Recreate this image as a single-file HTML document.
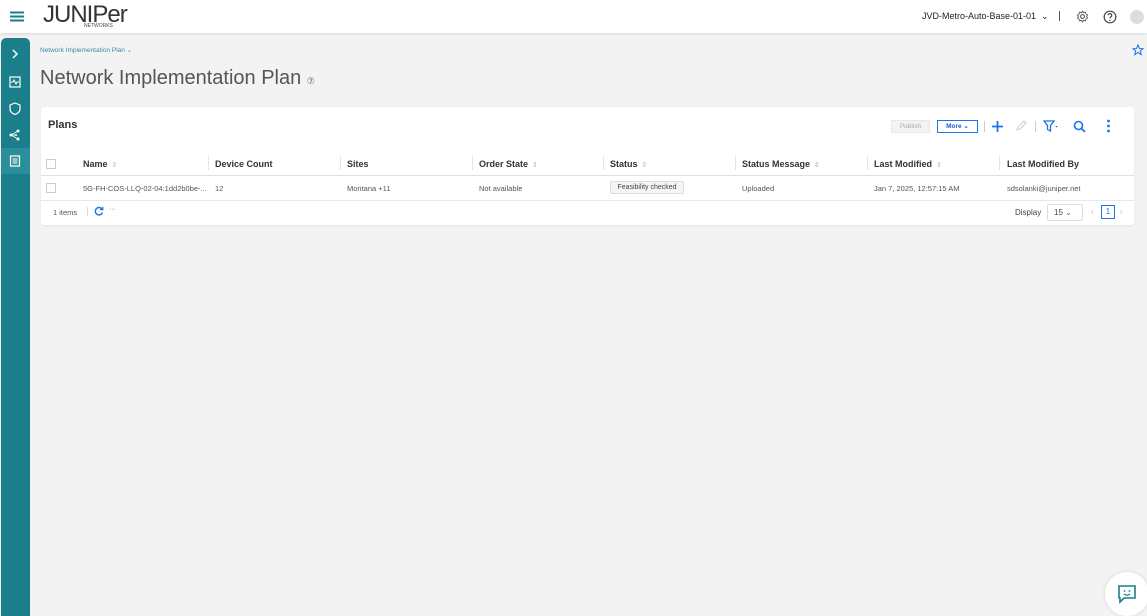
<!DOCTYPE html>
<html><head><meta charset="utf-8"><style>
*{box-sizing:border-box;margin:0;padding:0}
body{width:1147px;height:616px;overflow:hidden;background:#f3f3f3;font-family:"Liberation Sans",sans-serif;position:relative;color:#333}
.top{position:absolute;left:0;top:0;width:1147px;height:33px;background:#fff;box-shadow:0 1px 3px rgba(0,0,0,.12)}
.side{position:absolute;left:1px;top:38px;width:29px;height:578px;background:#1b7f8b;border-radius:5px 5px 0 0}
.abs{position:absolute}
.card{position:absolute;left:41px;top:107px;width:1093px;height:118px;background:#fff;border-radius:3px;box-shadow:0 1px 2px rgba(0,0,0,.06)}
.th{position:absolute;top:159px;font-size:9px;font-weight:bold;color:#333}
.td{position:absolute;top:184px;font-size:7.5px;color:#555}
.cb{position:absolute;width:10px;height:10px;border:1px solid #ccc;background:#fff;left:46px}
.sort{color:#bbb;font-size:7px;font-weight:normal;margin-left:4px}
.sep{position:absolute;top:156px;width:1px;height:14px;background:#e5e5e5}
</style></head><body>
<div class="top"></div>
<svg class="abs" style="left:10px;top:11px" width="14" height="11"><path d="M0 1.5H14M0 5.5H14M0 9.5H14" stroke="#1b7f8b" stroke-width="2"/></svg>
<div class="abs" style="left:43px;top:1px;font-size:24px;letter-spacing:-1px;color:#333">JUNIPer</div>
<div class="abs" style="left:84px;top:23px;font-size:5px;color:#444">NETWORKS</div>
<div class="abs" style="left:922px;top:11px;font-size:9px;color:#222">JVD-Metro-Auto-Base-01-01 &nbsp;⌄</div>
<div class="abs" style="left:1059px;top:11px;width:1px;height:10px;background:#555"></div>
<svg class="abs" style="left:1076px;top:10px" width="13" height="13" viewBox="0 0 24 24"><circle cx="12" cy="12" r="3.5" fill="none" stroke="#555" stroke-width="2"/><path d="M12 2l2 3 3.5-1 1 3.5 3 2-2 2.5 2 2.5-3 2-1 3.5-3.5-1-2 3-2-3-3.5 1-1-3.5-3-2 2-2.5-2-2.5 3-2 1-3.5 3.5 1z" fill="none" stroke="#555" stroke-width="1.6"/></svg>
<svg class="abs" style="left:1103px;top:10px" width="14" height="14" viewBox="0 0 24 24"><circle cx="12" cy="12" r="10" fill="none" stroke="#444" stroke-width="2"/><path d="M9 9a3 3 0 1 1 4 3c-1 .5-1 1.2-1 2.5" fill="none" stroke="#444" stroke-width="2"/><circle cx="12" cy="18" r="1.2" fill="#444"/></svg>
<div class="abs" style="left:1130px;top:10px;width:14px;height:14px;border-radius:50%;background:#ddd"></div>

<div class="side"></div>
<svg class="abs" style="left:10px;top:48px" width="10" height="12"><path d="M3 2l4 4-4 4" stroke="#fff" fill="none" stroke-width="1.5"/></svg>
<svg class="abs" style="left:9px;top:76px" width="12" height="12"><rect x="1" y="1" width="10" height="10" fill="none" stroke="#fff" stroke-width="1.2"/><path d="M2 6h2l1-2 2 4 1-2h2" stroke="#fff" fill="none"/></svg>
<svg class="abs" style="left:9px;top:102px" width="12" height="13"><path d="M6 1l5 2v4c0 3-2.5 4.5-5 5.5C3.5 11.5 1 10 1 7V3z" fill="none" stroke="#fff" stroke-width="1.2"/></svg>
<svg class="abs" style="left:9px;top:129px" width="12" height="12"><circle cx="2" cy="6" r="1.5" fill="#fff"/><circle cx="9" cy="2" r="1.5" fill="#fff"/><circle cx="9" cy="10" r="1.5" fill="#fff"/><circle cx="7" cy="6" r="1" fill="#fff"/><path d="M2 6L9 2M2 6l7 4M2 6h5" stroke="#fff" stroke-width=".8"/></svg>
<div class="abs" style="left:1px;top:148px;width:29px;height:26px;background:#2a8f9b"></div>
<svg class="abs" style="left:9px;top:155px" width="12" height="12"><rect x="1.5" y="1" width="9" height="10" fill="none" stroke="#fff" stroke-width="1.2"/><path d="M3.5 4h5M3.5 6h5M3.5 8h5" stroke="#fff"/></svg>

<div class="abs" style="left:40px;top:46px;font-size:6.5px;color:#3a8aa8">Network Implementation Plan ⌄</div>
<div class="abs" style="left:40px;top:67px;font-size:20px;color:#555">Network Implementation Plan <span style="font-size:9px;color:#666">⑦</span></div>
<svg class="abs" style="left:1132px;top:44px" width="12" height="12" viewBox="0 0 24 24"><path d="M12 2l3 7 7 .5-5.5 4.5 2 7.5L12 17l-6.5 4.5 2-7.5L2 9.5 9 9z" fill="none" stroke="#1a73e8" stroke-width="2"/></svg>

<div class="card"></div>
<div class="abs" style="left:48px;top:119px;font-size:11px;font-weight:bold;color:#333">Plans</div>
<div class="abs" style="left:891px;top:120px;width:39px;height:13px;background:#f3f3f3;border:1px solid #e8e8e8;font-size:6.5px;color:#aaa;text-align:center;line-height:11px">Publish</div>
<div class="abs" style="left:937px;top:120px;width:41px;height:13px;border:1px solid #1a73e8;font-size:6.5px;color:#1a5fd0;font-weight:bold;text-align:center;line-height:11px">More ⌄</div>
<div class="abs" style="left:984px;top:121px;width:1px;height:11px;background:#ccc"></div>
<svg class="abs" style="left:991px;top:120px" width="13" height="13"><path d="M6.5 1v11M1 6.5h11" stroke="#1a73e8" stroke-width="1.8"/></svg>
<svg class="abs" style="left:1015px;top:120px" width="12" height="12"><path d="M2 10l1-3 6-6 2 2-6 6z" fill="none" stroke="#ccc"/></svg>
<div class="abs" style="left:1035px;top:121px;width:1px;height:11px;background:#ccc"></div>
<svg class="abs" style="left:1043px;top:120px" width="16" height="12"><path d="M1 1h10L7.5 5.5V11L4.5 9.5V5.5z" fill="none" stroke="#1a73e8" stroke-width="1.3"/><path d="M12 6l1.5 1.5L15 6z" fill="#1a73e8"/></svg>
<svg class="abs" style="left:1073px;top:120px" width="13" height="13"><circle cx="5.5" cy="5.5" r="4" fill="none" stroke="#1a73e8" stroke-width="1.6"/><path d="M8.5 8.5l3.5 3.5" stroke="#1a73e8" stroke-width="1.8"/></svg>
<svg class="abs" style="left:1106px;top:119px" width="5" height="14"><circle cx="2.5" cy="2" r="1.4" fill="#1a73e8"/><circle cx="2.5" cy="7" r="1.4" fill="#1a73e8"/><circle cx="2.5" cy="12" r="1.4" fill="#1a73e8"/></svg>

<div class="cb" style="top:159px"></div>
<div class="th" style="left:83px">Name<span class="sort">⇕</span></div>
<div class="sep" style="left:208px"></div>
<div class="th" style="left:215px">Device Count</div>
<div class="sep" style="left:340px"></div>
<div class="th" style="left:347px">Sites</div>
<div class="sep" style="left:472px"></div>
<div class="th" style="left:479px">Order State<span class="sort">⇕</span></div>
<div class="sep" style="left:603px"></div>
<div class="th" style="left:610px">Status<span class="sort">⇕</span></div>
<div class="sep" style="left:735px"></div>
<div class="th" style="left:742px">Status Message<span class="sort">⇕</span></div>
<div class="sep" style="left:867px"></div>
<div class="th" style="left:874px">Last Modified<span class="sort">⇕</span></div>
<div class="sep" style="left:999px"></div>
<div class="th" style="left:1007px">Last Modified By</div>
<div class="abs" style="left:41px;top:175px;width:1093px;height:1px;background:#e0e0e0"></div>
<div class="cb" style="top:183px"></div>
<div class="td" style="left:83px">5G-FH-COS-LLQ-02-04:1dd2b0be-...</div>
<div class="td" style="left:215px">12</div>
<div class="td" style="left:347px">Montana +11</div>
<div class="td" style="left:479px">Not available</div>
<div class="abs" style="left:610px;top:181px;width:74px;height:13px;background:#f5f5f5;border:1px solid #ddd;border-radius:2px;font-size:7px;color:#444;text-align:center;line-height:11px">Feasibility checked</div>
<div class="td" style="left:742px">Uploaded</div>
<div class="td" style="left:874px">Jan 7, 2025, 12:57:15 AM</div>
<div class="td" style="left:1007px">sdsolanki@juniper.net</div>
<div class="abs" style="left:41px;top:200px;width:1093px;height:1px;background:#e8e8e8"></div>
<div class="abs" style="left:53px;top:208px;font-size:7.5px;color:#555">1 items</div>
<div class="abs" style="left:87px;top:207px;width:1px;height:9px;background:#ddd"></div>
<svg class="abs" style="left:94px;top:206px" width="10" height="10"><path d="M8 3A3.7 3.7 0 1 0 8.5 6.5" fill="none" stroke="#1a73e8" stroke-width="1.4"/><path d="M8.8 0.8V3.6H6" fill="none" stroke="#1a73e8" stroke-width="1.2"/></svg>
<div class="abs" style="left:109px;top:206px;font-size:7px;color:#1a73e8">···</div>
<div class="abs" style="left:1015px;top:208px;font-size:8px;color:#444">Display</div>
<div class="abs" style="left:1047px;top:204px;width:36px;height:17px;border:1px solid #ddd;border-radius:2px;font-size:8px;color:#444;line-height:15px;padding-left:6px">15 <span style="color:#1a73e8">⌄</span></div>
<div class="abs" style="left:1091px;top:207px;font-size:8px;color:#bbb">‹</div>
<div class="abs" style="left:1101px;top:205px;width:14px;height:14px;border:1px solid #1a73e8;font-size:8px;color:#1a73e8;text-align:center;line-height:12px">1</div>
<div class="abs" style="left:1120px;top:207px;font-size:8px;color:#bbb">›</div>

<div class="abs" style="left:1105px;top:572px;width:44px;height:44px;border-radius:50%;background:#fff;box-shadow:0 0 4px rgba(0,0,0,.12)"></div>
<svg class="abs" style="left:1117px;top:584px" width="20" height="20"><path d="M2 2h16v12H7l-4 4V14H2z" fill="none" stroke="#1b7f8b" stroke-width="1.6"/><circle cx="7.5" cy="7" r=".9" fill="#1b7f8b"/><circle cx="12.5" cy="7" r=".9" fill="#1b7f8b"/><path d="M7 10q3 2.5 6 0" fill="none" stroke="#1b7f8b" stroke-width="1.2"/></svg>
</body></html>
